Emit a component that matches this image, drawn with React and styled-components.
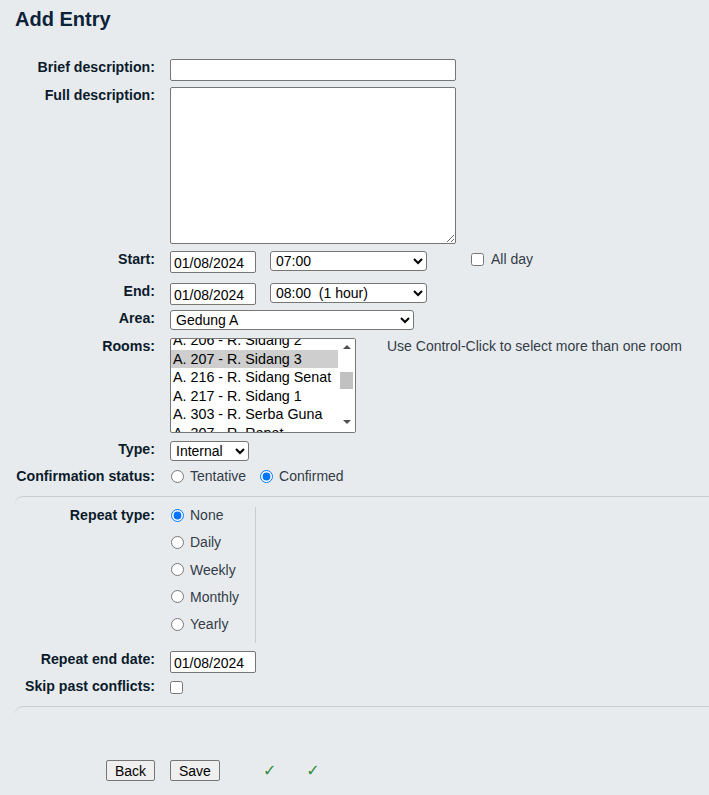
import styled, { createGlobalStyle } from 'styled-components';

const GlobalStyle = createGlobalStyle`
  html, body {
    margin: 0;
    padding: 0;
    background-color: #e8ebee;
  }
  body {
    font-family: "Liberation Sans", Arial, Helvetica, sans-serif;
    font-size: 14px;
    color: #333c47;
  }
`;

const Page = styled.div`
  min-height: 795px;
  box-sizing: border-box;
`;

const Heading = styled.h2`
  margin: 0;
  padding: 7px 15px 0;
  font-size: 20px;
  line-height: 24px;
  font-weight: bold;
  color: #0b2239;
`;

const Form = styled.form`
  margin-top: 28px;
`;

const Row = styled.div`
  display: grid;
  grid-template-columns: ${p => p.$label || 155}px 1fr;
  column-gap: 15px;
  align-items: start;
  margin-bottom: ${p => p.$gap || 0}px;
`;

const Label = styled.label`
  text-align: right;
  font-weight: bold;
  font-size: 14.2px;
  line-height: 16px;
  color: #0b1b2b;
  white-space: nowrap;
`;

const Controls = styled.div`
  display: flex;
  align-items: ${p => p.$align || 'flex-start'};
`;

const TextInput = styled.input`
  box-sizing: border-box;
  width: ${p => p.$w}px;
  height: 22px;
  margin: 0;
  padding: 1px 3px 0;
  border: 1px solid #767676;
  border-radius: 2px;
  background: #fff;
  font-family: "Liberation Sans", Arial, sans-serif;
  font-size: 14px;
  color: #000;
`;

const TextArea = styled.textarea`
  box-sizing: border-box;
  display: block;
  width: 286px;
  height: 157px;
  margin: 0;
  border: 1px solid #767676;
  border-radius: 2px;
  background: #fff;
  font-family: "Liberation Sans", Arial, sans-serif;
  font-size: 14px;
`;

const Select = styled.select`
  box-sizing: border-box;
  width: ${p => p.$w}px;
  height: 20px;
  margin: 0 0 0 ${p => p.$ml || 0}px;
  padding: 0 1px;
  border: 1px solid #767676;
  border-radius: 3px;
  background-color: #fff;
  font-family: "Liberation Sans", Arial, sans-serif;
  font-size: 14px;
  color: #000;
`;

const CheckBox = styled.input.attrs({ type: 'checkbox' })`
  width: 13px;
  height: 13px;
  margin: ${p => p.$m || '0'};
  flex: none;
`;

const Radio = styled.input.attrs({ type: 'radio' })`
  width: 13px;
  height: 13px;
  margin: 0 6px 0 1px;
  flex: none;
`;

const Option = styled.label`
  display: flex;
  align-items: center;
  height: 16px;
  line-height: 16px;
  margin-right: ${p => p.$mr || 0}px;
  color: #333c47;
  white-space: nowrap;
`;

const HelpText = styled.span`
  line-height: 16px;
  margin-left: ${p => p.$ml || 0}px;
  color: #333c47;
  white-space: nowrap;
`;

/* scrolled multi-select list */
const ListBox = styled.div`
  box-sizing: border-box;
  width: 186px;
  height: 95px;
  border: 1px solid #767676;
  border-radius: 2px;
  background: #fff;
  display: flex;
  overflow: hidden;
  flex: none;
`;

const ListItems = styled.div`
  flex: 1;
  overflow: hidden;
`;

const ListInner = styled.div`
  margin-top: -8px;
`;

const ListItem = styled.div`
  height: 18.5px;
  line-height: 18.5px;
  padding-left: 2px;
  font-size: 14.3px;
  color: #000;
  white-space: nowrap;
  background: ${p => (p.$selected ? '#cecece' : 'transparent')};
`;

const ScrollBar = styled.div`
  width: 17px;
  display: flex;
  flex-direction: column;
  align-items: center;
  justify-content: space-between;
  padding: 6px 0 8px;
  box-sizing: border-box;
  background: #fff;
`;

const Thumb = styled.div`
  width: 13px;
  height: 17px;
  margin-top: -8px;
  background: #c1c1c1;
`;

const Arrow = styled.svg`
  display: block;
`;

const Section = styled.fieldset`
  margin: 0 0 0 15px;
  padding: ${p => p.$pad};
  border: 0;
  border-top: 1px solid #c9cdd2;
  border-top-left-radius: 8px;
  min-width: 0;
`;

const RadioColumn = styled.div`
  width: 85px;
  display: flex;
  flex-direction: column;
  gap: 11.25px;
  padding-bottom: 11px;
  border-right: 1px solid #c9cdd2;
`;

const Button = styled.button`
  box-sizing: border-box;
  height: 21px;
  margin: 0;
  padding: 0 8px;
  border: 1px solid #767676;
  border-radius: 2px;
  background: #efefef;
  font-family: "Liberation Sans", Arial, sans-serif;
  font-size: 14px;
  color: #000;
  justify-self: ${p => p.$justify || 'start'};
`;

const Check = styled.span`
  font-family: "DejaVu Sans", sans-serif;
  font-size: 16px;
  font-weight: bold;
  line-height: 21px;
  color: #2e8b3a;
  margin-left: ${p => p.$ml}px;
`;

const rooms = [
  'A. 206 - R. Sidang 2',
  'A. 207 - R. Sidang 3',
  'A. 216 - R. Sidang Senat',
  'A. 217 - R. Sidang 1',
  'A. 303 - R. Serba Guna',
  'A. 307 - R. Rapat',
];

const repeatTypes = ['None', 'Daily', 'Weekly', 'Monthly', 'Yearly'];

const App = () => (
  <Page>
    <GlobalStyle />
    <Heading>Add Entry</Heading>
    <Form onSubmit={e => e.preventDefault()}>
      <Row $gap={6}>
        <Label>Brief description:</Label>
        <Controls>
          <TextInput $w={286} defaultValue="" />
        </Controls>
      </Row>
      <Row $gap={7}>
        <Label>Full description:</Label>
        <Controls>
          <TextArea />
        </Controls>
      </Row>
      <Row $gap={10}>
        <Label>Start:</Label>
        <Controls>
          <TextInput $w={86} defaultValue="01/08/2024" />
          <Select $w={157} $ml={14} defaultValue="07:00">
            <option>07:00</option>
          </Select>
          <CheckBox $m="2px 7px 0 44px" />
          <HelpText>All day</HelpText>
        </Controls>
      </Row>
      <Row $gap={5}>
        <Label>End:</Label>
        <Controls>
          <TextInput $w={86} defaultValue="01/08/2024" />
          <Select $w={157} $ml={14} defaultValue="08:00  (1 hour)">
            <option>08:00&nbsp;&nbsp;(1 hour)</option>
          </Select>
        </Controls>
      </Row>
      <Row $gap={8}>
        <Label>Area:</Label>
        <Controls>
          <Select $w={244} defaultValue="Gedung A">
            <option>Gedung A</option>
          </Select>
        </Controls>
      </Row>
      <Row $gap={8}>
        <Label>Rooms:</Label>
        <Controls>
          <ListBox>
            <ListItems>
              <ListInner>
                {rooms.map((r, i) => (
                  <ListItem key={r} $selected={i === 1}>{r}</ListItem>
                ))}
              </ListInner>
            </ListItems>
            <ScrollBar>
              <Arrow width="8" height="4" viewBox="0 0 8 4">
                <path d="M0 4 L4 0 L8 4 Z" fill="#505050" />
              </Arrow>
              <Thumb />
              <Arrow width="8" height="4" viewBox="0 0 8 4">
                <path d="M0 0 L8 0 L4 4 Z" fill="#505050" />
              </Arrow>
            </ScrollBar>
          </ListBox>
          <HelpText $ml={31}>Use Control-Click to select more than one room</HelpText>
        </Controls>
      </Row>
      <Row $gap={7}>
        <Label>Type:</Label>
        <Controls>
          <Select $w={79} defaultValue="Internal">
            <option>Internal</option>
          </Select>
        </Controls>
      </Row>
      <Row $gap={12}>
        <Label>Confirmation status:</Label>
        <Controls>
          <Option $mr={13}>
            <Radio name="confirm" />
            Tentative
          </Option>
          <Option>
            <Radio name="confirm" defaultChecked />
            Confirmed
          </Option>
        </Controls>
      </Row>

      <Section $pad="10px 0 12px">
        <Row $label={140} $gap={8}>
          <Label>Repeat type:</Label>
          <Controls>
            <RadioColumn>
              {repeatTypes.map((t, i) => (
                <Option key={t}>
                  <Radio name="repeat" defaultChecked={i === 0} />
                  {t}
                </Option>
              ))}
            </RadioColumn>
          </Controls>
        </Row>
        <Row $label={140} $gap={5}>
          <Label>Repeat end date:</Label>
          <Controls>
            <TextInput $w={86} defaultValue="01/08/2024" />
          </Controls>
        </Row>
        <Row $label={140}>
          <Label>Skip past conflicts:</Label>
          <Controls>
            <CheckBox $m="3px 0 0 0" />
          </Controls>
        </Row>
      </Section>

      <Section $pad="53px 0 14px">
        <Row $label={140}>
          <Button type="button" $justify="end">Back</Button>
          <Controls $align="center">
            <Button type="submit">Save</Button>
            <Check $ml={43}>✓</Check>
            <Check $ml={30}>✓</Check>
          </Controls>
        </Row>
      </Section>
    </Form>
  </Page>
);

export default App;
